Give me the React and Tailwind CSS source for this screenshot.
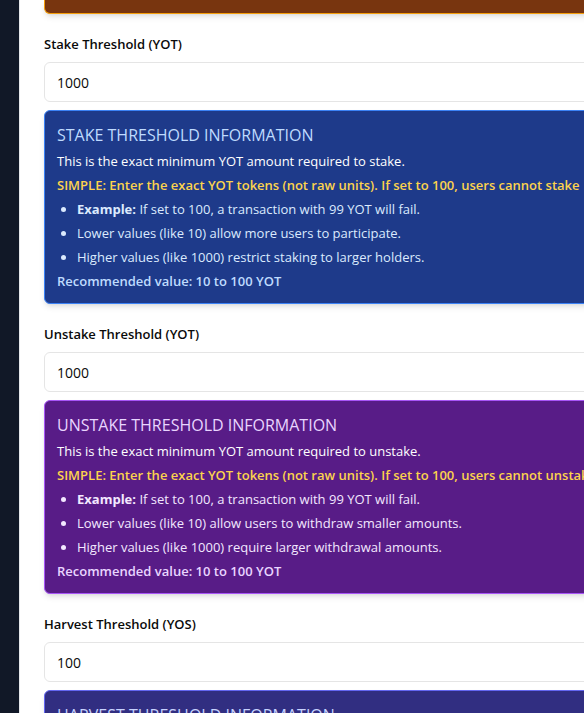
import React from "react";

const sections = [
  {
    id: "stake",
    label: "Stake Threshold (YOT)",
    value: "1000",
    title: "STAKE THRESHOLD INFORMATION",
    intro: "This is the exact minimum YOT amount required to stake.",
    simple: "SIMPLE: Enter the exact YOT tokens (not raw units). If set to 100, users cannot stake",
    points: [
      "Lower values (like 10) allow more users to participate.",
      "Higher values (like 1000) restrict staking to larger holders.",
    ],
    box: "bg-[#1e3a8a] border-[#3b82f6]",
    accent: "text-[#bfdbfe]",
    body: "text-[#dbeafe]",
  },
  {
    id: "unstake",
    label: "Unstake Threshold (YOT)",
    value: "1000",
    title: "UNSTAKE THRESHOLD INFORMATION",
    intro: "This is the exact minimum YOT amount required to unstake.",
    simple: "SIMPLE: Enter the exact YOT tokens (not raw units). If set to 100, users cannot unstake",
    points: [
      "Lower values (like 10) allow users to withdraw smaller amounts.",
      "Higher values (like 1000) require larger withdrawal amounts.",
    ],
    box: "bg-[#581c87] border-[#a855f7]",
    accent: "text-[#e9d5ff]",
    body: "text-[#f3e8ff]",
  },
  {
    id: "harvest",
    label: "Harvest Threshold (YOS)",
    value: "100",
    title: "HARVEST THRESHOLD INFORMATION",
    box: "bg-[#312e81] border-[#6366f1]",
    accent: "text-[#c7d2fe]",
  },
];

function Information({ section }) {
  return (
    <div className={`mt-2 rounded-md border p-3 text-[13px] leading-5 shadow-md ${section.box}`}>
      <h3 className={`text-base font-medium ${section.accent}`}>{section.title}</h3>
      {section.intro && (
        <>
          <p className="mt-1 text-white">{section.intro}</p>
          <p className="mt-1 font-semibold whitespace-nowrap text-[#fcd34d]">{section.simple}</p>
          <ul className={`mt-1 list-disc space-y-1 pl-5 ${section.body}`}>
            <li>
              <strong>Example:</strong> If set to 100, a transaction with 99 YOT will fail.
            </li>
            {section.points.map((point) => (
              <li key={point}>{point}</li>
            ))}
          </ul>
          <p className={`mt-1 font-semibold ${section.accent}`}>Recommended value: 10 to 100 YOT</p>
        </>
      )}
    </div>
  );
}

export default function App() {
  return (
    <div className="h-screen overflow-hidden bg-[#111827] pl-[19px] font-['Segoe_UI','Open_Sans',sans-serif]">
      <main className="-mr-8 border-l border-[#e5e7eb] bg-white px-6 text-[#0a0a0a]">
        <div className="h-[14px] rounded-b-md border border-t-0 border-[#f59e0b] bg-[#78350f] shadow-md" />
        {sections.map((section) => (
          <section key={section.id} className="pt-5">
            <label htmlFor={section.id} className="mb-2 block text-[13px] leading-5 font-semibold">
              {section.label}
            </label>
            <input
              id={section.id}
              type="text"
              defaultValue={section.value}
              className="block h-10 w-full rounded-md border border-[#e5e5e5] bg-white px-3 text-sm"
            />
            <Information section={section} />
          </section>
        ))}
      </main>
    </div>
  );
}
